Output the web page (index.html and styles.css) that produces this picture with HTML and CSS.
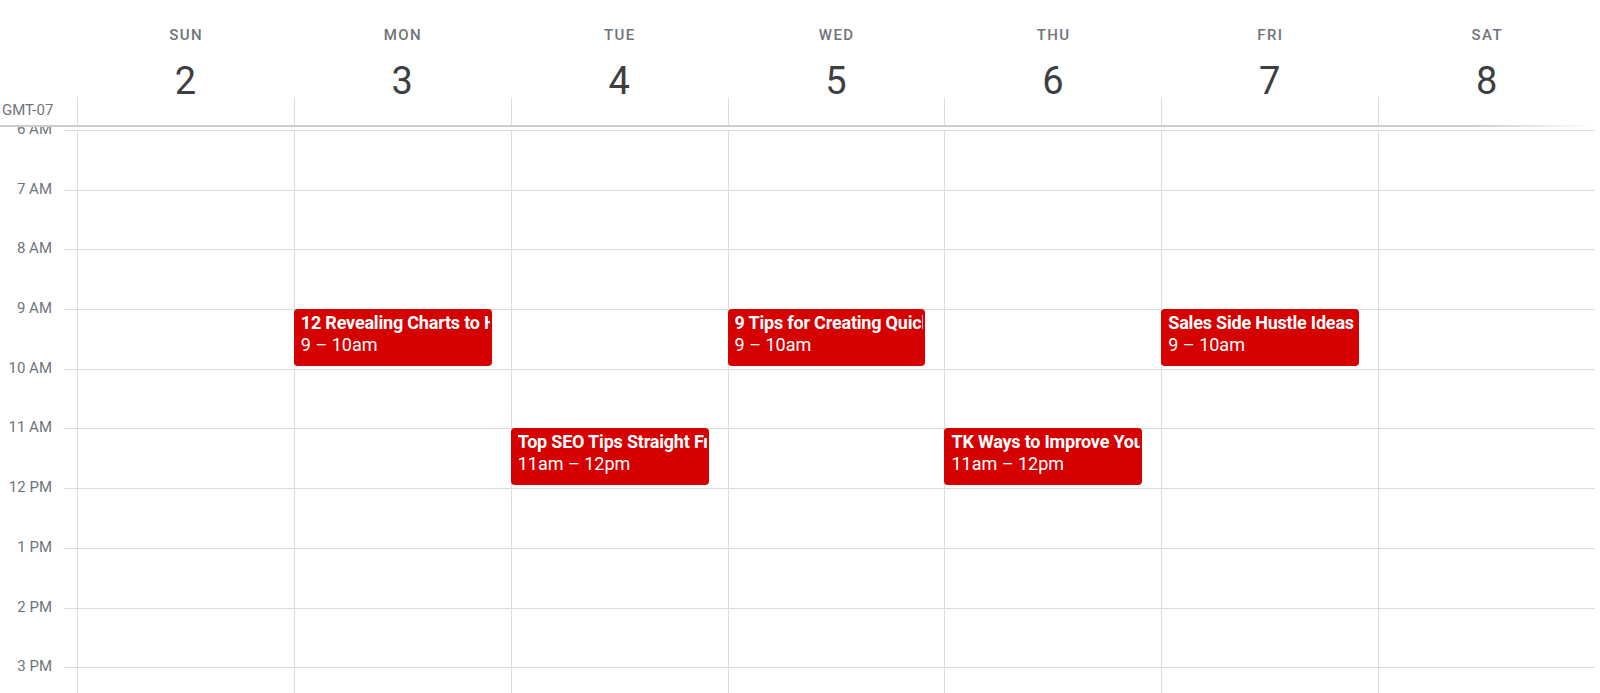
FILE: index.html
```html
<!DOCTYPE html>
<html lang="en">
<head>
<meta charset="utf-8">
<title>Week view</title>
<link rel="stylesheet" href="styles.css">
</head>
<body>
<div class="calendar">
  <header class="header">
    <div class="corner"></div>
    <div class="dh"><div class="dow">SUN</div><div class="dnum">2</div></div>
    <div class="dh"><div class="dow">MON</div><div class="dnum">3</div></div>
    <div class="dh"><div class="dow">TUE</div><div class="dnum">4</div></div>
    <div class="dh"><div class="dow">WED</div><div class="dnum">5</div></div>
    <div class="dh"><div class="dow">THU</div><div class="dnum">6</div></div>
    <div class="dh"><div class="dow">FRI</div><div class="dnum">7</div></div>
    <div class="dh"><div class="dow">SAT</div><div class="dnum">8</div></div>
    <div class="tz">GMT-07</div>
    <div class="allday"></div>
    <div class="allday"></div>
    <div class="allday"></div>
    <div class="allday"></div>
    <div class="allday"></div>
    <div class="allday"></div>
    <div class="allday"></div>
  </header>

  <main class="grid">
    <div class="gutter">
      <div class="hour"><span class="hl">6 AM</span><span class="tick"></span></div>
      <div class="hour"><span class="hl">7 AM</span><span class="tick"></span></div>
      <div class="hour"><span class="hl">8 AM</span><span class="tick"></span></div>
      <div class="hour"><span class="hl">9 AM</span><span class="tick"></span></div>
      <div class="hour"><span class="hl">10 AM</span><span class="tick"></span></div>
      <div class="hour"><span class="hl">11 AM</span><span class="tick"></span></div>
      <div class="hour"><span class="hl">12 PM</span><span class="tick"></span></div>
      <div class="hour"><span class="hl">1 PM</span><span class="tick"></span></div>
      <div class="hour"><span class="hl">2 PM</span><span class="tick"></span></div>
      <div class="hour"><span class="hl">3 PM</span><span class="tick"></span></div>
    </div>

    <div class="days">
      <div class="day">
        <div class="slot"></div><div class="slot"></div><div class="slot"></div><div class="slot"></div><div class="slot"></div>
        <div class="slot"></div><div class="slot"></div><div class="slot"></div><div class="slot"></div><div class="slot"></div>
      </div>
      <div class="day">
        <div class="slot"></div><div class="slot"></div><div class="slot"></div>
        <div class="slot">
          <div class="event"><div class="ev-title">12 Revealing Charts to Help Marketers</div><div class="ev-time">9 – 10am</div></div>
        </div>
        <div class="slot"></div>
        <div class="slot"></div><div class="slot"></div><div class="slot"></div><div class="slot"></div><div class="slot"></div>
      </div>
      <div class="day">
        <div class="slot"></div><div class="slot"></div><div class="slot"></div><div class="slot"></div><div class="slot"></div>
        <div class="slot">
          <div class="event"><div class="ev-title">Top SEO Tips Straight From the Experts</div><div class="ev-time">11am – 12pm</div></div>
        </div>
        <div class="slot"></div><div class="slot"></div><div class="slot"></div><div class="slot"></div>
      </div>
      <div class="day">
        <div class="slot"></div><div class="slot"></div><div class="slot"></div>
        <div class="slot">
          <div class="event"><div class="ev-title">9 Tips for Creating Quick Videos</div><div class="ev-time">9 – 10am</div></div>
        </div>
        <div class="slot"></div>
        <div class="slot"></div><div class="slot"></div><div class="slot"></div><div class="slot"></div><div class="slot"></div>
      </div>
      <div class="day">
        <div class="slot"></div><div class="slot"></div><div class="slot"></div><div class="slot"></div><div class="slot"></div>
        <div class="slot">
          <div class="event"><div class="ev-title">TK Ways to Improve Your Blog</div><div class="ev-time">11am – 12pm</div></div>
        </div>
        <div class="slot"></div><div class="slot"></div><div class="slot"></div><div class="slot"></div>
      </div>
      <div class="day">
        <div class="slot"></div><div class="slot"></div><div class="slot"></div>
        <div class="slot">
          <div class="event"><div class="ev-title">Sales Side Hustle Ideas</div><div class="ev-time">9 – 10am</div></div>
        </div>
        <div class="slot"></div>
        <div class="slot"></div><div class="slot"></div><div class="slot"></div><div class="slot"></div><div class="slot"></div>
      </div>
      <div class="day">
        <div class="slot"></div><div class="slot"></div><div class="slot"></div><div class="slot"></div><div class="slot"></div>
        <div class="slot"></div><div class="slot"></div><div class="slot"></div><div class="slot"></div><div class="slot"></div>
      </div>
    </div>
  </main>
</div>
</body>
</html>
```

FILE: styles.css
```css
html, body {
  margin: 0;
  padding: 0;
  height: 100%;
  background: #fff;
  overflow: hidden;
}

body {
  font-family: Roboto, "Liberation Sans", Arial, sans-serif;
  color: #3c4043;
}

.calendar {
  display: flex;
  flex-direction: column;
  height: 100%;
}

/* ---------- header ---------- */
.header {
  display: grid;
  grid-template-columns: 77px repeat(7, 1fr);
  grid-template-rows: 97px 28px;
  padding-right: 5px;
  border-bottom: 2px solid transparent;
  border-image: linear-gradient(to right, #cdcdcd 0%, #cdcdcd 92%, rgba(255,255,255,0) 99.6%) 1;
  flex: none;
}

.dh {
  display: flex;
  flex-direction: column;
  align-items: center;
}

.dow {
  margin-top: 27px;
  font-size: 15px;
  line-height: 17px;
  font-weight: 500;
  letter-spacing: 1.4px;
  padding-left: 1.4px;
  color: #70757a;
}

.dnum {
  margin-top: 17.5px;
  font-size: 38px;
  line-height: 38px;
  font-weight: 400;
  color: #3c4043;
}

.tz {
  padding-left: 2px;
  margin-top: 5px;
  font-size: 15px;
  line-height: 17px;
  color: #70757a;
  white-space: nowrap;
}

.allday {
  border-left: 1px solid #dadce0;
}

/* ---------- time grid ---------- */
.grid {
  flex: 1;
  display: flex;
  overflow: hidden;
  padding-top: 3px;
  padding-right: 5px;
}

.gutter {
  width: 77px;
  flex: none;
  display: flex;
  flex-direction: column;
}

.hour {
  height: 59.7px;
  flex: none;
  display: flex;
  align-items: flex-start;
}

.hl {
  width: 64px;
  box-sizing: border-box;
  padding-right: 12px;
  margin-top: -9px;
  text-align: right;
  font-size: 15px;
  line-height: 17px;
  color: #70757a;
  white-space: nowrap;
}

.tick {
  flex: 1;
  border-top: 1px solid #dadce0;
}

.days {
  flex: 1;
  display: grid;
  grid-template-columns: repeat(7, 1fr);
}

.day {
  border-left: 1px solid #dadce0;
  display: flex;
  flex-direction: column;
  min-width: 0;
}

.slot {
  height: 59.7px;
  flex: none;
  box-sizing: border-box;
  border-top: 1px solid #dadce0;
  padding-right: 19px;
}

.event {
  height: 57px;
  margin: -1px 0 0 -1px;
  box-sizing: border-box;
  padding: 2.5px 2px 0 7px;
  background: #d50000;
  border-radius: 4px;
  color: #fff;
  font-size: 18px;
  line-height: 22.5px;
  white-space: nowrap;
  overflow: hidden;
}

.ev-title {
  font-weight: 700;
  letter-spacing: -0.2px;
  overflow: hidden;
}

.ev-time {
  font-weight: 400;
}
```
